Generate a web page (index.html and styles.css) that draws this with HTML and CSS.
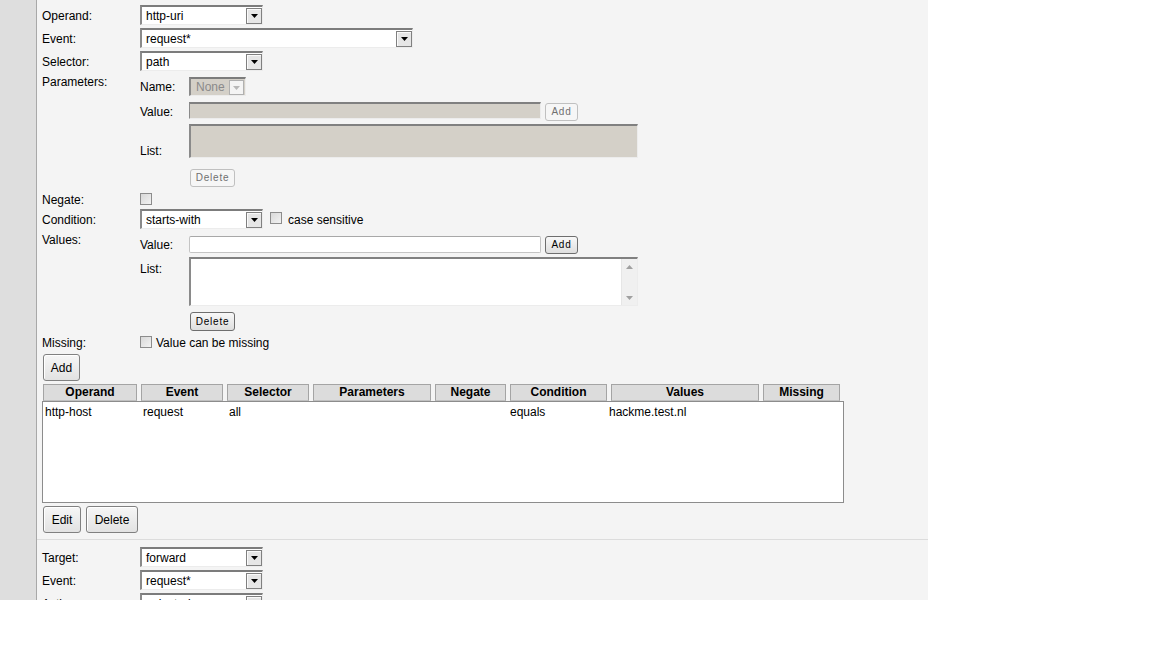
FILE: index.html
```html
<!DOCTYPE html>
<html>
<head>
<meta charset="utf-8">
<link rel="stylesheet" href="styles.css">
</head>
<body>
<div class="page">
  <div class="strip"></div>
  <div class="main">
    <div class="sec sec1">
      <div class="row r20"><span class="lbl">Operand:</span>
        <div class="sel w123"><span class="val">http-uri</span><span class="arr"><svg width="7" height="4" viewBox="0 0 7 4"><path d="M0 0H7L3.5 4Z" fill="#000"/></svg></span></div>
      </div>
      <div class="row r20 mt3"><span class="lbl">Event:</span>
        <div class="sel w273"><span class="val">request*</span><span class="arr"><svg width="7" height="4" viewBox="0 0 7 4"><path d="M0 0H7L3.5 4Z" fill="#000"/></svg></span></div>
      </div>
      <div class="row r20 mt3"><span class="lbl">Selector:</span>
        <div class="sel w123"><span class="val">path</span><span class="arr"><svg width="7" height="4" viewBox="0 0 7 4"><path d="M0 0H7L3.5 4Z" fill="#000"/></svg></span></div>
      </div>
      <div class="block mt3"><span class="lbl pt1">Parameters:</span>
        <div class="sub">
          <div class="subrow mt3 h19"><span class="slbl">Name:</span>
            <div class="sel dis w57"><span class="val">None</span><span class="arr"><svg width="7" height="4" viewBox="0 0 7 4"><path d="M0 0H7L3.5 4Z" fill="#b8b8b8"/></svg></span></div>
          </div>
          <div class="subrow mt6 h19"><span class="slbl">Value:</span>
            <div class="inp dis"></div>
            <button class="sbtn dbtn" disabled>Add</button>
          </div>
          <div class="subrow bottom mt3"><span class="slbl">List:</span>
            <div class="ta dis h34"></div>
          </div>
          <div class="subrow mt11"><span class="slbl"></span>
            <button class="sbtn dbtn del">Delete</button>
          </div>
        </div>
      </div>
      <div class="row r14 mt5"><span class="lbl">Negate:</span><span class="cb"></span></div>
      <div class="row r20 mt3"><span class="lbl">Condition:</span>
        <div class="sel w123"><span class="val">starts-with</span><span class="arr"><svg width="7" height="4" viewBox="0 0 7 4"><path d="M0 0H7L3.5 4Z" fill="#000"/></svg></span></div>
        <span class="cb cs"></span><span class="cstxt">case sensitive</span>
      </div>
      <div class="block mt3"><span class="lbl pt1">Values:</span>
        <div class="sub">
          <div class="subrow mt4 h19"><span class="slbl vl">Value:</span>
            <div class="inp en"></div>
            <button class="sbtn ebtn">Add</button>
          </div>
          <div class="subrow top mt2"><span class="slbl pt5">List:</span>
            <div class="ta en h49">
              <div class="sb"><svg width="7" height="4" viewBox="0 0 7 4"><path d="M0 4H7L3.5 0Z" fill="#a0a0a0"/></svg><svg width="7" height="4" viewBox="0 0 7 4"><path d="M0 0H7L3.5 4Z" fill="#a0a0a0"/></svg></div>
            </div>
          </div>
          <div class="subrow mt6"><span class="slbl"></span>
            <button class="sbtn ebtn del h19b">Delete</button>
          </div>
        </div>
      </div>
      <div class="row r14 mt4"><span class="lbl">Missing:</span><span class="cb"></span><span class="mtxt">Value can be missing</span></div>
      <button class="bbtn addb">Add</button>
      <div class="thead">
        <div class="th c1">Operand</div>
        <div class="th c2">Event</div>
        <div class="th c3">Selector</div>
        <div class="th c4">Parameters</div>
        <div class="th c5">Negate</div>
        <div class="th c6">Condition</div>
        <div class="th c7">Values</div>
        <div class="th c8">Missing</div>
      </div>
      <div class="tbody">
        <div class="tr">
          <div class="td c1">http-host</div>
          <div class="td c2">request</div>
          <div class="td c3">all</div>
          <div class="td c4"></div>
          <div class="td c5"></div>
          <div class="td c6 sh">equals</div>
          <div class="td c7 sh2">hackme.test.nl</div>
          <div class="td c8"></div>
        </div>
      </div>
      <div class="btns">
        <button class="bbtn editb">Edit</button>
        <button class="bbtn delb">Delete</button>
      </div>
    </div>
    <div class="sec sec2">
      <div class="row r20"><span class="lbl">Target:</span>
        <div class="sel w123"><span class="val">forward</span><span class="arr"><svg width="7" height="4" viewBox="0 0 7 4"><path d="M0 0H7L3.5 4Z" fill="#000"/></svg></span></div>
      </div>
      <div class="row r20 mt3"><span class="lbl">Event:</span>
        <div class="sel w123"><span class="val">request*</span><span class="arr"><svg width="7" height="4" viewBox="0 0 7 4"><path d="M0 0H7L3.5 4Z" fill="#000"/></svg></span></div>
      </div>
      <div class="row r20 mt3"><span class="lbl">Action:</span>
        <div class="sel w123"><span class="val">selected</span><span class="arr"><svg width="7" height="4" viewBox="0 0 7 4"><path d="M0 0H7L3.5 4Z" fill="#000"/></svg></span></div>
      </div>
    </div>
  </div>
</div>
</body>
</html>
```

FILE: styles.css
```css
* { box-sizing: border-box; }
html, body { margin: 0; padding: 0; background: #fff; }
body { font-family: "Liberation Sans", Arial, sans-serif; font-size: 12px; color: #000; }

.page { width: 928px; height: 600px; overflow: hidden; display: flex; background: #f4f4f4; }
.strip { width: 37px; flex: none; background: #dedede; border-right: 1px solid #a8a8a8; }
.main { flex: 1; display: flex; flex-direction: column; }

.sec { padding-left: 5px; }
.sec1 { padding-top: 5px; padding-bottom: 6px; border-bottom: 1px solid #dcdcdc; }
.sec2 { padding-top: 7px; }

.row { display: flex; align-items: center; }
.row .lbl { padding-top: 1px; }
.r20 { height: 20px; }
.r14 { height: 14px; }
.mt2 { margin-top: 2px; }
.mt3 { margin-top: 3px; }
.mt4 { margin-top: 4px; }
.mt5 { margin-top: 5px; }
.mt6 { margin-top: 6px; }
.mt11 { margin-top: 11px; }
.h19 { height: 19px; }
.pt1 { padding-top: 1px; }
.pt5 { padding-top: 5px; }

.lbl { width: 98px; flex: none; line-height: 14px; }
.block { display: flex; align-items: flex-start; }
.sub { display: flex; flex-direction: column; }
.subrow { display: flex; align-items: center; }
.subrow.top { align-items: flex-start; }
.subrow.bottom { align-items: flex-end; }
.slbl { width: 49px; flex: none; line-height: 14px; }
.vl { margin-top: -1px; }

.sel { height: 20px; display: flex; align-items: center; background: #fff;
  border-top: 2px solid #7c7c7c; border-left: 2px solid #8a8a8a;
  border-bottom: 1px solid #ececec; border-right: 1px solid #ececec; }
.sel .val { flex: 1; padding-left: 4px; white-space: nowrap; overflow: hidden; }
.sel .arr { width: 16px; height: 16px; flex: none; margin-right: 0;
  border: 1px solid #808080; background: #e6e6e6;
  box-shadow: inset 1px 1px 0 #fafafa; display: flex; align-items: center; justify-content: center; padding-top: 1px; }
.w123 { width: 123px; }
.w273 { width: 273px; }
.w57 { width: 57px; height: 19px; }
.sel.dis { background: #d4d0c8; color: #8a8a8a; }
.sel.dis .val { padding-left: 5px; }
.sel.dis .arr { width: 15px; height: 15px; margin-right: 1px; background: #f4f4f4; border-color: #b0b0b0; box-shadow: none; }

.inp { width: 352px; height: 17px; flex: none; align-self: flex-start; }
.inp.dis { background: #d4d0c8; border-top: 2px solid #808080; border-left: 1px solid #8a8a8a; border-bottom: 1px solid #ececec; border-right: 1px solid #ececec; }
.inp.en { background: #fff; border: 1px solid #c4c4c4; border-top-color: #a8a8a8; border-radius: 2px; }

.ta { width: 449px; flex: none; position: relative; }
.h34 { height: 34px; }
.h49 { height: 49px; }
.ta.dis { background: #d4d0c8; border-top: 2px solid #808080; border-left: 2px solid #8a8a8a; border-bottom: 1px solid #ececec; border-right: 1px solid #ececec; }
.ta.en { background: #fff; border-top: 2px solid #808080; border-left: 2px solid #8a8a8a; border-bottom: 1px solid #ececec; border-right: 1px solid #ececec; display: flex; justify-content: flex-end; }
.sb { width: 16px; height: 100%; background: #f0f0f0; border-left: 1px solid #e6e6e6; display: flex; flex-direction: column; justify-content: space-between; align-items: center; padding: 6px 0 5px; }

.sbtn { font-family: "Liberation Sans", Arial, sans-serif; font-size: 10px; letter-spacing: 0.8px;
  height: 18px; width: 33px; padding: 0; margin: 0 0 0 4px; border-radius: 3px; line-height: 14px; align-self: flex-start; }
.dbtn { border: 1px solid #c0c0c0; background: #f6f6f6; color: #707070; }
.dbtn:not(.del) { margin-top: 1px; }
.ebtn { border: 1px solid #6e6e6e; background: linear-gradient(#f8f8f8, #dedede); color: #000; }
.del { width: 45px; margin-left: 1px; }
.h19b { height: 19px; }

.cb { width: 12px; height: 12px; flex: none; border: 1px solid #8c8c8c; background: linear-gradient(135deg, #d8d8d8, #f2f2f2); }
.cs { margin-left: 7px; margin-top: -2px; }
.cstxt { margin-left: 6px; padding-top: 1px; }
.mtxt { margin-left: 4px; padding-top: 1px; }

.bbtn { font-family: "Liberation Sans", Arial, sans-serif; font-size: 12px; height: 27px; padding: 0;
  border: 1px solid #808080; border-radius: 3px; background: linear-gradient(#f6f6f6, #e2e2e2);
  color: #000; box-shadow: inset 1px 1px 0 #fff; display: block; }
.addb { width: 37px; margin: 5px 0 0 1px; }

.thead { display: flex; margin: 3px 0 0 1px; }
.th { height: 17px; background: #dcdcdc; border: 1px solid #a4a4a4; border-bottom-color: #c0c0c0;
  font-weight: bold; text-align: center; line-height: 15px; margin-right: 4px; flex: none; }
.c1 { width: 94px; } .c2 { width: 82px; } .c3 { width: 82px; } .c4 { width: 118px; }
.c5 { width: 71px; } .c6 { width: 97px; } .c7 { width: 148px; } .c8 { width: 77px; }
.tbody { width: 802px; height: 102px; background: #fff; border: 1px solid #8c8c8c; }
.tr { display: flex; padding-top: 3px; }
.td { flex: none; margin-right: 4px; padding-left: 2px; line-height: 14px; white-space: nowrap; }
.td.c1 { width: 95px; }
.td.c2 { padding-left: 1px; }
.td.c3 { padding-left: 1px; }
.sh { padding-left: 0; margin-left: -1px; }
.sh2 { padding-left: 0; margin-left: -2px; }

.btns { display: flex; gap: 5px; margin: 3px 0 0 1px; }
.editb { width: 38px; }
.delb { width: 52px; }
```
